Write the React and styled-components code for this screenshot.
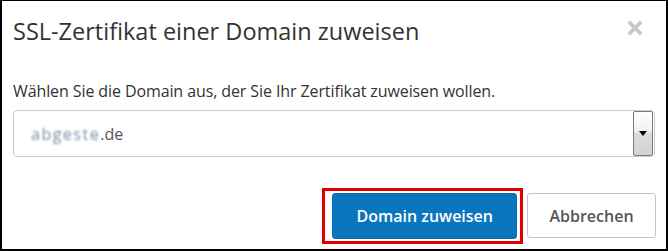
import React from "react";
import styled, { createGlobalStyle } from "styled-components";

const Global = createGlobalStyle`
  html, body { margin: 0; padding: 0; background: #fff; }
  body { font-family: "Open Sans", "Liberation Sans", sans-serif; }
`;

const Frame = styled.div`
  box-sizing: border-box;
  width: 668px;
  height: 251px;
  border-style: solid;
  border-color: #000;
  border-width: 1px 2px 2px 2px;
  background: #fff;
  display: flex;
  flex-direction: column;
`;

const Header = styled.div`
  display: flex;
  align-items: flex-start;
  justify-content: space-between;
  padding: 15px 24px 0 11px;
  height: 56px;
  box-sizing: border-box;
`;

const Title = styled.h4`
  margin: 0;
  font-size: 23.5px;
  font-weight: 400;
  line-height: 30px;
  color: #333;
`;

const Close = styled.button`
  border: 0;
  background: none;
  padding: 0;
  margin-top: 5px;
  line-height: 0;
  cursor: pointer;
`;

const Body = styled.div`
  padding: 23px 11px 0 11px;
  display: flex;
  flex-direction: column;
  gap: 8px;
`;

const Label = styled.p`
  margin: 0;
  font-size: 16px;
  line-height: 22px;
  letter-spacing: -0.1px;
  color: #333;
`;

const Select = styled.div`
  box-sizing: border-box;
  height: 47px;
  border: 1px solid #ccc;
  border-radius: 4px;
  display: flex;
  align-items: stretch;
  justify-content: space-between;
  padding-left: 17px;
  padding-right: 1px;
`;

const Value = styled.span`
  align-self: center;
  font-size: 16px;
  color: #555;
  display: flex;
  align-items: center;
`;

const Blur = styled.span`
  color: #7a8aa6;
  filter: blur(1.2px);
  letter-spacing: 1.5px;
  white-space: nowrap;
`;

const ArrowBox = styled.span`
  box-sizing: border-box;
  width: 20px;
  border: 1px solid #7a7a7a;
  border-radius: 2px;
  background: linear-gradient(#fdfdfd 0%, #f2f2f2 45%, #dcdcdc 50%, #d2d2d2 100%);
  display: flex;
  align-items: center;
  justify-content: center;
`;

const Footer = styled.div`
  margin-top: auto;
  display: flex;
  justify-content: flex-end;
  align-items: flex-start;
  gap: 4px;
  padding: 0 10px 5px 0;
`;

const Highlight = styled.div`
  border: 3px solid #e00000;
  padding: 2px 3px 2px 7px;
  display: flex;
`;

const Button = styled.button`
  box-sizing: border-box;
  height: ${(p) => (p.$primary ? "46px" : "45px")};
  padding: 0 ${(p) => (p.$primary ? "23px" : "18px")};
  border-radius: 3px;
  font-family: "Open Sans", "Liberation Sans", sans-serif;
  font-size: 16px;
  font-weight: 600;
  border: 1px solid ${(p) => (p.$primary ? "#0a6fb0" : "#c4c4c4")};
  background: ${(p) => (p.$primary ? "#0a76bd" : "#fff")};
  color: ${(p) => (p.$primary ? "#fff" : "#555")};
  min-width: ${(p) => (p.$primary ? "183px" : "129px")};
  margin-top: ${(p) => (p.$primary ? "0" : "5px")};
`;

export default function App() {
  return (
    <>
      <Global />
      <Frame>
        <Header>
          <Title>SSL-Zertifikat einer Domain zuweisen</Title>
          <Close aria-label="Schließen">
            <svg width="14" height="14" viewBox="0 0 14 14">
              <path d="M2 2L12 12M12 2L2 12" stroke="#c6c6c6" strokeWidth="3.8" strokeLinecap="round" />
            </svg>
          </Close>
        </Header>
        <Body>
          <Label>Wählen Sie die Domain aus, der Sie Ihr Zertifikat zuweisen wollen.</Label>
          <Select>
            <Value>
              <Blur>abgeste</Blur>.de
            </Value>
            <ArrowBox>
              <svg width="8" height="5" viewBox="0 0 8 5">
                <path d="M0 0H8L4 5Z" fill="#000" />
              </svg>
            </ArrowBox>
          </Select>
        </Body>
        <Footer>
          <Highlight>
            <Button $primary>Domain zuweisen</Button>
          </Highlight>
          <Button>Abbrechen</Button>
        </Footer>
      </Frame>
    </>
  );
}
